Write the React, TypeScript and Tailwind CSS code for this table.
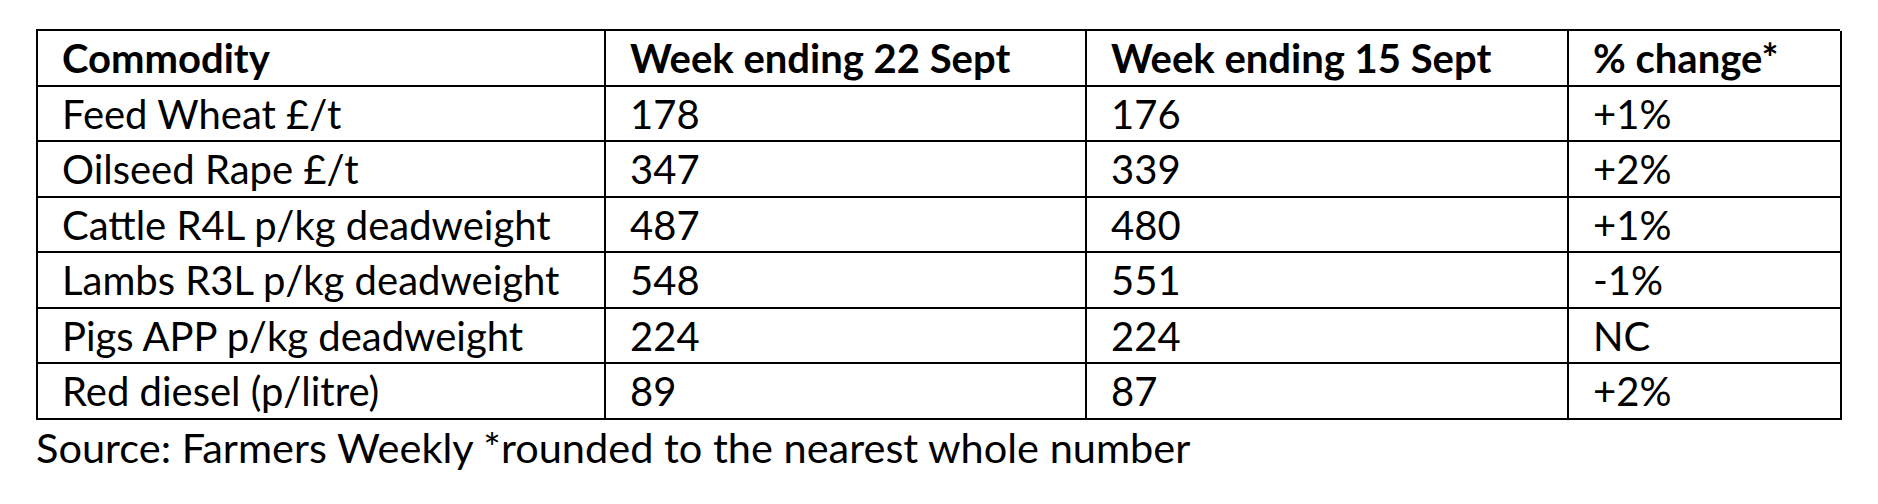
import React from 'react'

type Row = {
  name: string
  current: string
  previous: string
  change: string
}

const rows: Row[] = [
  { name: 'Feed Wheat £/t', current: '178', previous: '176', change: '+1%' },
  { name: 'Oilseed Rape £/t', current: '347', previous: '339', change: '+2%' },
  { name: 'Cattle R4L p/kg deadweight', current: '487', previous: '480', change: '+1%' },
  { name: 'Lambs R3L p/kg deadweight', current: '548', previous: '551', change: '-1%' },
  { name: 'Pigs APP p/kg deadweight', current: '224', previous: '224', change: 'NC' },
  { name: 'Red diesel (p/litre)', current: '89', previous: '87', change: '+2%' },
]

const headers = ['Commodity', 'Week ending 22 Sept', 'Week ending 15 Sept', '% change*']

function Cell({ children, bold }: { children: React.ReactNode; bold?: boolean }) {
  return (
    <div
      className={
        'h-[55.5px] border-r-2 border-b-2 border-black pl-[24px] leading-[54px] whitespace-nowrap ' +
        (bold ? 'font-bold' : 'font-normal')
      }
    >
      {children}
    </div>
  )
}

export default function App() {
  return (
    <div
      className="w-[1878px] h-[504px] bg-white text-black pl-[36px] pt-[29px] text-[40px]"
      style={{ fontFamily: 'Lato, "Liberation Sans", sans-serif' }}
    >
      {/* Price table */}
      <div className="grid w-[1804px] grid-cols-[568px_481px_482px_273px] border-t-2 border-l-2 border-black">
        {headers.map((h) => (
          <Cell key={h} bold>
            {h}
          </Cell>
        ))}
        {rows.map((r) => (
          <React.Fragment key={r.name}>
            <Cell>{r.name}</Cell>
            <Cell>{r.current}</Cell>
            <Cell>{r.previous}</Cell>
            <Cell>{r.change}</Cell>
          </React.Fragment>
        ))}
      </div>

      {/* Footnote */}
      <p className="text-[41.5px] leading-[54px] whitespace-nowrap">
        Source: Farmers Weekly *rounded to the nearest whole number
      </p>
    </div>
  )
}
